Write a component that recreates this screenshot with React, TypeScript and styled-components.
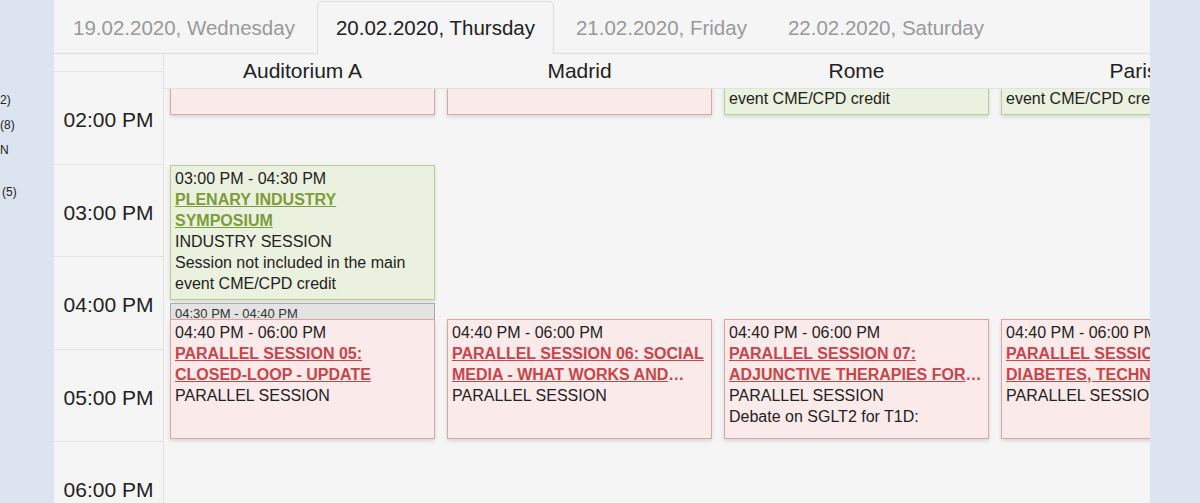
import React from 'react';
import styled, { createGlobalStyle, css } from 'styled-components';

type Kind = 'parallel' | 'industry' | 'break';

type Session = {
  start: string;
  end: string;
  kind: Kind;
  title?: string;
  type?: string;
  note?: string;
};

type Room = { name: string; sessions: Session[] };

const HOUR = 92.5;
const ORIGIN = 14 * 60; // 02:00 PM
const SCROLL = -18; // the 02:00 PM line sits above the top of the column body

const toMin = (t: string) => {
  const [h, m] = t.split(':').map(Number);
  return h * 60 + m;
};

const fmt = (t: string) => {
  const [h, m] = t.split(':').map(Number);
  const hh = h % 12 === 0 ? 12 : h % 12;
  return `${String(hh).padStart(2, '0')}:${String(m).padStart(2, '0')} ${h >= 12 ? 'PM' : 'AM'}`;
};

const yOf = (t: string) => ((toMin(t) - ORIGIN) * HOUR) / 60 + SCROLL;

const days = [
  '19.02.2020, Wednesday',
  '20.02.2020, Thursday',
  '21.02.2020, Friday',
  '22.02.2020, Saturday',
];

const hours = ['02:00 PM', '03:00 PM', '04:00 PM', '05:00 PM', '06:00 PM'];

const industryNote = 'Session not included in the main event CME/CPD credit';

const rooms: Room[] = [
  {
    name: 'Auditorium A',
    sessions: [
      { start: '13:00', end: '14:30', kind: 'parallel', title: 'PARALLEL SESSION 01: HYPOGLYCAEMIA', type: 'PARALLEL SESSION' },
      { start: '15:00', end: '16:30', kind: 'industry', title: 'PLENARY INDUSTRY SYMPOSIUM', type: 'INDUSTRY SESSION', note: industryNote },
      { start: '16:30', end: '16:40', kind: 'break' },
      { start: '16:40', end: '18:00', kind: 'parallel', title: 'PARALLEL SESSION 05: CLOSED-LOOP - UPDATE', type: 'PARALLEL SESSION' },
    ],
  },
  {
    name: 'Madrid',
    sessions: [
      { start: '13:00', end: '14:30', kind: 'parallel', title: 'PARALLEL SESSION 02: INSULIN PUMPS', type: 'PARALLEL SESSION' },
      { start: '16:40', end: '18:00', kind: 'parallel', title: "PARALLEL SESSION 06: SOCIAL MEDIA - WHAT WORKS AND WHAT DOESN'T", type: 'PARALLEL SESSION' },
    ],
  },
  {
    name: 'Rome',
    sessions: [
      { start: '13:00', end: '14:30', kind: 'industry', title: 'INDUSTRY SYMPOSIUM: NEW INSULIN THERAPIES', type: 'INDUSTRY SESSION', note: industryNote },
      { start: '16:40', end: '18:00', kind: 'parallel', title: 'PARALLEL SESSION 07: ADJUNCTIVE THERAPIES FOR TYPE 1 DIABETES', type: 'PARALLEL SESSION', note: 'Debate on SGLT2 for T1D:' },
    ],
  },
  {
    name: 'Paris',
    sessions: [
      { start: '13:00', end: '14:30', kind: 'industry', title: 'INDUSTRY SYMPOSIUM: CONNECTED PENS', type: 'INDUSTRY SESSION', note: industryNote },
      { start: '16:40', end: '18:00', kind: 'parallel', title: 'PARALLEL SESSION 08: DIABETES, TECHNOLOGY AND THE ELDERLY', type: 'PARALLEL SESSION' },
    ],
  },
];

const railItems = [
  { text: '2)', indent: 0, space: 0 },
  { text: '(8)', indent: 0, space: 0 },
  { text: 'N', indent: 0, space: 0 },
  { text: '(5)', indent: 2, space: 17 },
];

const App = () => {
  return (
    <Page>
      <GlobalStyle />
      <LeftRail>
        {railItems.map((r) => (
          <RailItem key={r.text} $indent={r.indent} $space={r.space}>
            {r.text}
          </RailItem>
        ))}
      </LeftRail>

      <Main>
        <TabBar>
          {days.map((d, i) => (
            <Tab key={d} $active={i === 1}>
              {d}
            </Tab>
          ))}
        </TabBar>

        <Schedule>
          <TimeColumn>
            <TimeHead />
            {hours.map((h) => (
              <TimeSlot key={h}>{h}</TimeSlot>
            ))}
          </TimeColumn>

          {rooms.map((room) => (
            <RoomColumn key={room.name}>
              <RoomHead>{room.name}</RoomHead>
              <RoomBody>
                {room.sessions.map((s) => {
                  const top = yOf(s.start) + 1;
                  const height = yOf(s.end) - yOf(s.start) - 3;
                  if (s.kind === 'break') {
                    return (
                      <BreakBox key={s.start} style={{ top, height }}>
                        {fmt(s.start)} - {fmt(s.end)}
                      </BreakBox>
                    );
                  }
                  return (
                    <EventBox key={s.start} $kind={s.kind} style={{ top, height }}>
                      <div>
                        {fmt(s.start)} - {fmt(s.end)}
                      </div>
                      <Title href="#" $kind={s.kind}>
                        {s.title}
                      </Title>
                      <div>{s.type}</div>
                      {s.note && <div>{s.note}</div>}
                    </EventBox>
                  );
                })}
              </RoomBody>
            </RoomColumn>
          ))}
        </Schedule>
      </Main>

      <RightRail />
    </Page>
  );
};

export default App;

const GlobalStyle = createGlobalStyle`
  html, body {
    margin: 0;
    padding: 0;
  }
  body {
    font-family: "Liberation Sans", Arial, Helvetica, sans-serif;
    color: #222;
  }
`;

const Page = styled.div`
  display: flex;
  width: 1200px;
  height: 503px;
  overflow: hidden;
  background: #dce5ef;
`;

const LeftRail = styled.div`
  width: 54px;
  flex-shrink: 0;
  padding-top: 88px;
  box-sizing: border-box;
  overflow: hidden;
  font-size: 12px;
  line-height: 25px;
  color: #222;
`;

const RailItem = styled.div<{ $indent: number; $space: number }>`
  padding-left: ${(p) => p.$indent}px;
  margin-top: ${(p) => p.$space}px;
  white-space: nowrap;
`;

const RightRail = styled.div`
  width: 50px;
  flex-shrink: 0;
  background: #dce5ef;
`;

const Main = styled.div`
  width: 1096px;
  flex-shrink: 0;
  display: flex;
  flex-direction: column;
  background: #f5f5f5;
  overflow: hidden;
`;

const TabBar = styled.div`
  display: flex;
  align-items: flex-end;
  gap: 3px;
  height: 54px;
  box-sizing: border-box;
  border-bottom: 1px solid #dcdcdc;
  flex-shrink: 0;
`;

const Tab = styled.div<{ $active: boolean }>`
  height: 53px;
  margin-bottom: -1px;
  box-sizing: border-box;
  display: flex;
  align-items: center;
  padding: 0 18px;
  border: 1px solid transparent;
  border-bottom: none;
  border-radius: 5px 5px 0 0;
  font-size: 20.5px;
  white-space: nowrap;
  color: #999;
  cursor: pointer;

  ${(p) =>
    p.$active &&
    css`
      color: #222;
      background: #f5f5f5;
      border-color: #dcdcdc;
    `}
`;

const Schedule = styled.div`
  display: flex;
  flex: 1;
  min-height: 0;
`;

const TimeColumn = styled.div`
  width: 110px;
  flex-shrink: 0;
  box-sizing: border-box;
  border-right: 1px solid #e2e2e2;
  display: flex;
  flex-direction: column;
`;

const TimeHead = styled.div`
  height: 18px;
  flex-shrink: 0;
  box-sizing: border-box;
  border-bottom: 1px solid #e2e2e2;
`;

const TimeSlot = styled.div`
  height: 92.5px;
  flex-shrink: 0;
  box-sizing: border-box;
  border-bottom: 1px solid #e2e2e2;
  display: flex;
  align-items: center;
  justify-content: center;
  padding-top: 5px;
  font-size: 21px;
  color: #222;
  white-space: nowrap;
`;

const RoomColumn = styled.div`
  width: 277px;
  flex-shrink: 0;
  display: flex;
  flex-direction: column;
`;

const RoomHead = styled.div`
  height: 35px;
  flex-shrink: 0;
  box-sizing: border-box;
  border-bottom: 1px solid #e2e2e2;
  display: flex;
  align-items: center;
  justify-content: center;
  font-size: 21px;
  color: #222;
  white-space: nowrap;
`;

const RoomBody = styled.div`
  position: relative;
  flex: 1;
  overflow: hidden;
`;

const palette = {
  parallel: css`
    background: #fbeaea;
    border-color: #dba3a5;
  `,
  industry: css`
    background: #ebf1df;
    border-color: #b8cd93;
  `,
  break: css`
    background: #e3e3e3;
    border-color: #aaaaaa;
  `,
};

const EventBox = styled.div<{ $kind: Kind }>`
  position: absolute;
  left: 6px;
  right: 6px;
  box-sizing: border-box;
  padding: 2px 3px 2px 4px;
  border: 1px solid;
  overflow: hidden;
  font-size: 16px;
  line-height: 21px;
  color: #222;
  box-shadow: 0 2px 4px rgba(0, 0, 0, 0.12);
  ${(p) => palette[p.$kind]}
`;

const Title = styled.a<{ $kind: Kind }>`
  display: -webkit-box;
  -webkit-box-orient: vertical;
  -webkit-line-clamp: 2;
  overflow: hidden;
  font-weight: bold;
  text-decoration: underline;
  color: ${(p) => (p.$kind === 'industry' ? '#7d9b39' : '#c7454b')};
`;

const BreakBox = styled.div`
  position: absolute;
  left: 6px;
  right: 6px;
  min-height: 20px;
  box-sizing: border-box;
  padding: 2px 4px 0;
  border: 1px solid #aaaaaa;
  background: #e3e3e3;
  overflow: hidden;
  font-size: 13px;
  line-height: 16px;
  color: #333;
  white-space: nowrap;
`;
